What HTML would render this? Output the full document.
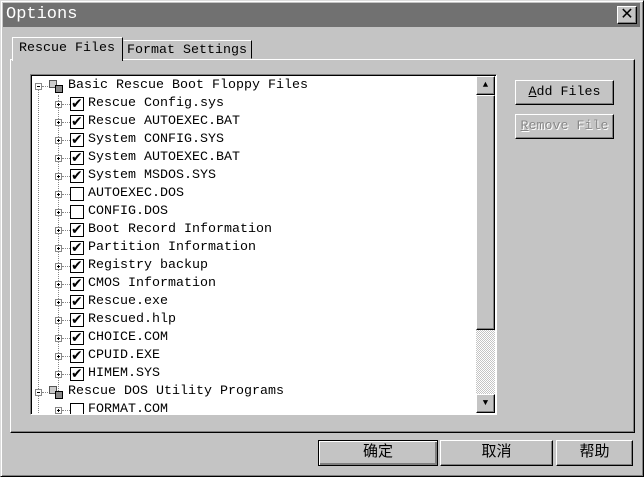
<!DOCTYPE html>
<html><head><style>
*{margin:0;padding:0;box-sizing:border-box}
body{width:644px;height:477px;background:#c4c4c4;position:relative;overflow:hidden;font-family:"Liberation Mono","Noto Sans CJK SC",monospace;font-size:13.33px;color:#000}
.a{position:absolute}
.win{left:0;top:0;width:644px;height:477px;border:1px solid #000;border-top-color:#dcdcdc;border-left-color:#dcdcdc;box-shadow:inset 1px 1px 0 #fff,inset -1px -1px 0 #808080}
.title{left:3px;top:3px;width:637px;height:24px;background:#717171;color:#fff;font-size:17px;line-height:24px;padding-left:3px}
.btn{background:#c4c4c4;border:1px solid;border-color:#fff #000 #000 #fff;box-shadow:inset -1px -1px 0 #808080;text-align:center}
.row{position:absolute;left:0;height:18px;line-height:18px;white-space:nowrap}
.cb{position:absolute;left:39px;top:2px;width:14px;height:14px;border:1px solid #000;background:#fff}
.pl{position:absolute;left:24px;top:6px;width:7px;height:7px;border:1px solid #888;background:#fff}
.pl:before{content:"";position:absolute;left:1px;top:2px;width:3px;height:1px;background:#000}
.pl.p:after{content:"";position:absolute;left:2px;top:1px;width:1px;height:3px;background:#000}
.dh{position:absolute;left:31px;top:9px;width:8px;border-top:1px dotted #888}
.t{position:absolute;left:57px}
.ck{position:absolute;left:0px;top:-3px;font-size:14px;font-family:"DejaVu Sans",sans-serif}
.ic{position:absolute;width:14px;height:12px;top:3px}
.ic:before{content:"";position:absolute;left:0;top:0;width:6px;height:6px;border:1px solid #555;background:#ccc}
.ic:after{content:"";position:absolute;left:6px;top:5px;width:6px;height:6px;border:1px solid #000;background:#888}
</style></head><body>
<div class="a win"></div>
<div class="a title">Options</div>
<div class="a btn" style="left:617px;top:6px;width:20px;height:18px;font-family:'Liberation Sans';font-size:16px;line-height:15px">✕</div>
<div class="a" style="left:10px;top:59px;width:625px;height:374px;border:1px solid;border-color:#fff #000 #000 #fff;box-shadow:inset -1px -1px 0 #808080"></div>
<div class="a" style="left:12px;top:37px;width:111px;height:24px;background:#c4c4c4;border:1px solid;border-color:#fff #000 transparent #fff;border-bottom:none;padding:3px 0 0 6px">Rescue Files</div>
<div class="a" style="left:123px;top:40px;width:129px;height:19px;border:1px solid;border-color:#fff #000 transparent transparent;padding:2px 0 0 3px">Format Settings</div>
<div class="a" style="left:30px;top:74px;width:467px;height:341px;background:#fff;border:1px solid;border-color:#808080 #fff #fff #808080;box-shadow:inset 1px 1px 0 #000;overflow:hidden">
<div class="a" style="left:7px;top:12px;height:330px;border-left:1px dotted #888"></div>
<div class="a" style="left:27px;top:20px;height:300px;border-left:1px dotted #888"></div>
<div id="rows" style="position:absolute;left:0;top:1px">
<div class="row" style="top:1px;width:400px"><div class="pl" style="left:4px"></div><div class="a" style="left:11px;top:9px;width:6px;border-top:1px dotted #888"></div><div class="ic" style="left:18px"></div><span class="t" style="left:37px">Basic Rescue Boot Floppy Files</span></div>
<div class="row" style="top:19px"><div class="dh"></div><div class="pl p"></div><div class="cb"><span class="ck">✔</span></div><span class="t">Rescue Config.sys</span></div>
<div class="row" style="top:37px"><div class="dh"></div><div class="pl p"></div><div class="cb"><span class="ck">✔</span></div><span class="t">Rescue AUTOEXEC.BAT</span></div>
<div class="row" style="top:55px"><div class="dh"></div><div class="pl p"></div><div class="cb"><span class="ck">✔</span></div><span class="t">System CONFIG.SYS</span></div>
<div class="row" style="top:73px"><div class="dh"></div><div class="pl p"></div><div class="cb"><span class="ck">✔</span></div><span class="t">System AUTOEXEC.BAT</span></div>
<div class="row" style="top:91px"><div class="dh"></div><div class="pl p"></div><div class="cb"><span class="ck">✔</span></div><span class="t">System MSDOS.SYS</span></div>
<div class="row" style="top:109px"><div class="dh"></div><div class="pl p"></div><div class="cb"></div><span class="t">AUTOEXEC.DOS</span></div>
<div class="row" style="top:127px"><div class="dh"></div><div class="pl p"></div><div class="cb"></div><span class="t">CONFIG.DOS</span></div>
<div class="row" style="top:145px"><div class="dh"></div><div class="pl p"></div><div class="cb"><span class="ck">✔</span></div><span class="t">Boot Record Information</span></div>
<div class="row" style="top:163px"><div class="dh"></div><div class="pl p"></div><div class="cb"><span class="ck">✔</span></div><span class="t">Partition Information</span></div>
<div class="row" style="top:181px"><div class="dh"></div><div class="pl p"></div><div class="cb"><span class="ck">✔</span></div><span class="t">Registry backup</span></div>
<div class="row" style="top:199px"><div class="dh"></div><div class="pl p"></div><div class="cb"><span class="ck">✔</span></div><span class="t">CMOS Information</span></div>
<div class="row" style="top:217px"><div class="dh"></div><div class="pl p"></div><div class="cb"><span class="ck">✔</span></div><span class="t">Rescue.exe</span></div>
<div class="row" style="top:235px"><div class="dh"></div><div class="pl p"></div><div class="cb"><span class="ck">✔</span></div><span class="t">Rescued.hlp</span></div>
<div class="row" style="top:253px"><div class="dh"></div><div class="pl p"></div><div class="cb"><span class="ck">✔</span></div><span class="t">CHOICE.COM</span></div>
<div class="row" style="top:271px"><div class="dh"></div><div class="pl p"></div><div class="cb"><span class="ck">✔</span></div><span class="t">CPUID.EXE</span></div>
<div class="row" style="top:289px"><div class="dh"></div><div class="pl p"></div><div class="cb"><span class="ck">✔</span></div><span class="t">HIMEM.SYS</span></div>
<div class="row" style="top:307px;width:400px"><div class="pl" style="left:4px"></div><div class="a" style="left:11px;top:9px;width:6px;border-top:1px dotted #888"></div><div class="ic" style="left:18px"></div><span class="t" style="left:37px">Rescue DOS Utility Programs</span></div>
<div class="row" style="top:325px"><div class="dh"></div><div class="pl p"></div><div class="cb"></div><span class="t">FORMAT.COM</span></div>
</div>
<div class="a" style="left:445px;top:1px;width:19px;height:337px;background:repeating-conic-gradient(#fff 0 25%,#c4c4c4 0 50%) 0 0/2px 2px"></div>
<div class="a btn" style="left:445px;top:1px;width:19px;height:19px;font-size:9px;line-height:16px">▲</div>
<div class="a btn" style="left:445px;top:20px;width:19px;height:235px"></div>
<div class="a btn" style="left:445px;top:319px;width:19px;height:19px;font-size:9px;line-height:16px">▼</div>
</div>
<div class="a btn" style="left:515px;top:80px;width:99px;height:25px;line-height:23px"><u>A</u>dd Files</div>
<div class="a btn" style="left:515px;top:114px;width:99px;height:25px;line-height:23px;color:#888;text-shadow:1px 1px 0 #fff"><u>R</u>emove File</div>
<div class="a btn" style="left:318px;top:440px;width:120px;height:26px;line-height:24px;font-size:15px;border:1px solid #000;box-shadow:inset 1px 1px 0 #fff,inset -2px -2px 0 #808080">确定</div>
<div class="a btn" style="left:440px;top:440px;width:113px;height:26px;line-height:24px;font-size:15px">取消</div>
<div class="a btn" style="left:556px;top:440px;width:77px;height:26px;line-height:24px;font-size:15px">帮助</div>
</body></html>
